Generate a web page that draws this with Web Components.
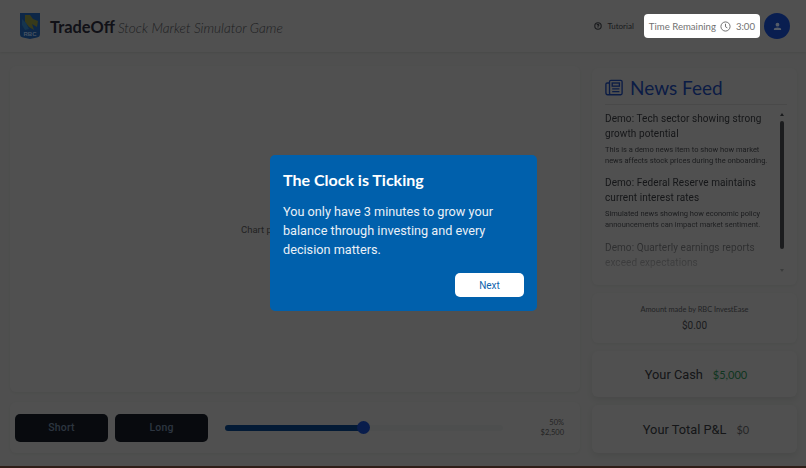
<!DOCTYPE html>
<html>
<head>
<meta charset="utf-8">
<title>TradeOff</title>
<style>
  html, body { margin: 0; height: 100%; }
  body { background: #9e9f9e; font-family: Lato, sans-serif; overflow: hidden; border-bottom: 2px solid #5e3d30; box-sizing: border-box; }
  #app { display: flex; flex-direction: column; height: 466px; }
  #main { flex: 1; display: grid; grid-template-columns: 570px 205px; column-gap: 12px; padding: 14px 9px 13px 10px; min-height: 0; }
  #left { display: flex; flex-direction: column; gap: 10px; min-height: 0; }
  #right { display: flex; flex-direction: column; padding-top: 2px; }
</style>
</head>
<body>
<div id="app">
  <app-header></app-header>
  <div id="main">
    <div id="left">
      <chart-panel>Chart placeholder (demo)</chart-panel>
      <trade-panel></trade-panel>
    </div>
    <div id="right">
      <news-feed>
        <news-item heading="Demo: Tech sector showing strong growth potential">This is a demo news item to show how market news affects stock prices during the onboarding.</news-item>
        <news-item heading="Demo: Federal Reserve maintains current interest rates">Simulated news showing how economic policy announcements can impact market sentiment.</news-item>
        <news-item heading="Demo: Quarterly earnings reports exceed expectations"></news-item>
      </news-feed>
      <invest-card></invest-card>
      <stat-card label="Your Cash" value="$5,000" tone="#226b40" style="height:46px;margin-top:8px"></stat-card>
      <stat-card label="Your Total P&amp;L" value="$0" tone="#4b4c4e" style="height:48px;margin-top:8px"></stat-card>
    </div>
  </div>
</div>
<onboarding-modal heading="The Clock is Ticking" action="Next">You only have 3 minutes to grow your balance through investing and every decision matters.</onboarding-modal>

<script>
class AppHeader extends HTMLElement {
  constructor() {
    super();
    this.attachShadow({ mode: "open" });
    this.shadowRoot.innerHTML = `
      <style>
        :host { display: flex; align-items: center; height: 52px; flex: none; padding: 0 16px 0 20px; box-sizing: border-box; background: #a1a1a1; box-shadow: 0 1px 2px rgba(0,0,0,.08); }
        svg.logo { width: 20px; height: 26px; flex: none; }
        .name { font: 700 16.400px Lato, sans-serif; color: #22222e; margin-left: 10px; }
        .sub { font: italic 300 13.600px Lato, sans-serif; color: #3b3d42; margin-left: 3px; margin-top: 3px; flex: 1; }
        .tutorial { display: flex; align-items: center; gap: 5px; font: 8px Lato, sans-serif; color: #33353a; margin-right: 10px; }
        .tutorial svg { width: 8px; height: 8px; }
        .avatar { width: 26px; height: 26px; border-radius: 50%; background: #123ca0; margin-left: 4px; display: flex; align-items: center; justify-content: center; }
        .avatar svg { width: 9px; height: 9px; }
      </style>
      <svg class="logo" viewBox="0 0 20 26">
        <path d="M0 0H20V21Q20 24 17 24.500L10 26L3 24.500Q0 24 0 21Z" fill="#1a4f8e"/>
        <path d="M5 2H10L13 6L18 8L17 14L12 11L14 17L9 14L5 9Z" fill="#6f7435"/>
        <path d="M2 6L6 10L9 16L5 17L2 12Z" fill="#2a6a9c"/>
        <text x="10" y="23" text-anchor="middle" font-family="Liberation Sans" font-weight="700" font-size="6" fill="#8fa6c4">RBC</text>
      </svg>
      <span class="name">TradeOff</span>
      <span class="sub">Stock Market Simulator Game</span>
      <span class="tutorial">
        <svg viewBox="0 0 10 10" fill="none" stroke="#33353a" stroke-width="1.400"><circle cx="5" cy="5" r="4"/><path d="M3.800 4Q4 2.900 5 3Q6.200 3.100 6 4.200Q5.800 4.800 5 5.100V6"/><path d="M5 6.800V7.500"/></svg>
        Tutorial
      </span>
      <time-remaining>3:00</time-remaining>
      <span class="avatar">
        <svg viewBox="0 0 10 10" fill="#aab8d0"><circle cx="5" cy="3" r="2.100"/><path d="M1 9V8Q1 6.200 5 6.200T9 8V9Z"/></svg>
      </span>
    `;
  }
}

// sits above the dimming layer, that is why it has its own z-index
class TimeRemaining extends HTMLElement {
  constructor() {
    super();
    this.attachShadow({ mode: "open" });
    this.shadowRoot.innerHTML = `
      <style>
        :host { position: relative; z-index: 30; display: flex; align-items: center; height: 24px; padding: 0 5px; border-radius: 4px; background: #fff; font: 9.600px Lato, sans-serif; color: #727272; box-sizing: border-box; }
        svg { width: 11px; height: 11px; margin: 0 5px 0 4px; }
      </style>
      <span>Time Remaining</span>
      <svg viewBox="0 0 12 12" fill="none" stroke="#666" stroke-width="1"><circle cx="6" cy="6" r="5"/><path d="M6 3V6.300L8 7.500"/></svg>
      <slot></slot>
    `;
  }
}

class ChartPanel extends HTMLElement {
  constructor() {
    super();
    this.attachShadow({ mode: "open" });
    this.shadowRoot.innerHTML = `
      <style>
        :host { flex: 1; display: flex; align-items: center; justify-content: center; min-height: 0; border-radius: 6px; background: #a1a1a1; box-shadow: 0 1px 3px rgba(0,0,0,.05); font: 9.500px Roboto, sans-serif; color: #454545; }
      </style>
      <slot></slot>
    `;
  }
}

class TradePanel extends HTMLElement {
  constructor() {
    super();
    this.attachShadow({ mode: "open" });
    this.shadowRoot.innerHTML = `
      <style>
        :host { display: flex; align-items: center; height: 51px; flex: none; padding: 0 16px 0 5px; border-radius: 6px; background: #a1a1a1; box-shadow: 0 1px 3px rgba(0,0,0,.05); box-sizing: border-box; }
        button { width: 93px; height: 28px; margin-right: 7px; border: 0; border-radius: 5px; background: #10151c; color: #5a6b80; font: 500 10.500px Roboto, sans-serif; letter-spacing: .2px; padding: 0; }
        .track { position: relative; flex: none; width: 278px; height: 6px; margin-left: 10px; border-radius: 3px; background: #9a9d9d; }
        .fill { position: absolute; left: 0; top: 0; bottom: 0; width: 50%; border-radius: 3px; background: #07356a; }
        .thumb { position: absolute; left: 132px; top: -3.500px; width: 13px; height: 13px; border-radius: 50%; background: #123a98; }
        .amount { margin-left: auto; text-align: right; font: 7.500px/10px Lato, sans-serif; color: #474747; }
      </style>
      <button>Short</button><button>Long</button>
      <div class="track"><div class="fill"></div><div class="thumb"></div></div>
      <div class="amount">50%<br>$2,500</div>
    `;
  }
}

class NewsFeed extends HTMLElement {
  constructor() {
    super();
    this.attachShadow({ mode: "open" });
    this.shadowRoot.innerHTML = `
      <style>
        :host { display: block; height: 217px; flex: none; padding: 0 10px 0 13px; border-radius: 6px; background: #a1a1a1; box-shadow: 0 1px 3px rgba(0,0,0,.05); box-sizing: border-box; }
        h2 { display: flex; align-items: center; gap: 7px; height: 34px; margin: 0; padding-top: 2px; font: 400 19px Lato, sans-serif; color: #17388a; border-bottom: 1px solid #929292; }
        h2 svg { width: 18px; height: 17px; flex: none; }
        .body { display: flex; height: 171px; }
        .list { flex: 1; padding: 6px 10px 0 0; overflow: hidden; -webkit-mask-image: linear-gradient(#000 116px, rgba(0,0,0,.2) 166px); mask-image: linear-gradient(#000 116px, rgba(0,0,0,.2) 166px); }
        .bar { width: 6px; flex: none; margin-right: 2px; position: relative; }
        .bar i { position: absolute; left: .500px; width: 0; height: 0; border: 2.500px solid transparent; }
        .up { top: 6px; border-bottom: 3px solid #33363a !important; }
        .down { bottom: 2px; border-top: 3px solid #767979 !important; }
        .thumb { position: absolute; left: 1px; top: 16px; width: 4px; height: 128px; border-radius: 2px; background: #36393c; }
      </style>
      <h2>
        <svg viewBox="0 0 20 18" fill="none" stroke="#17388a" stroke-width="1.500">
          <rect x="5" y="1" width="14" height="16" rx="1.500"/>
          <path d="M5 4H2.500Q1 4 1 5.500V14.500Q1 17 3 17H6"/>
          <rect x="8" y="4" width="8" height="3.500"/>
          <path d="M8 10.500H16M8 13.500H16"/>
        </svg>
        News Feed
      </h2>
      <div class="body">
        <div class="list"><slot></slot></div>
        <div class="bar"><i class="up"></i><div class="thumb"></div><i class="down"></i></div>
      </div>
    `;
  }
}

class NewsItem extends HTMLElement {
  constructor() {
    super();
    this.attachShadow({ mode: "open" });
    this.shadowRoot.innerHTML = `
      <style>
        :host { display: block; margin-bottom: 9px; }
        h3 { margin: 0; font: 400 10px/15px Roboto, sans-serif; color: #2b2d31; letter-spacing: .08px; }
        p { margin: 4px 0 0; font: 7.500px/10.700px Roboto, sans-serif; color: #36383c; }
      </style>
      <h3></h3>
      <p><slot></slot></p>
    `;
  }
  connectedCallback() {
    this.shadowRoot.querySelector("h3").textContent = this.getAttribute("heading");
  }
}

class InvestCard extends HTMLElement {
  constructor() {
    super();
    this.attachShadow({ mode: "open" });
    this.shadowRoot.innerHTML = `
      <style>
        :host { display: flex; flex-direction: column; align-items: center; justify-content: center; gap: 6px; height: 50px; flex: none; margin-top: 8px; border-radius: 6px; background: #a1a1a1; box-shadow: 0 1px 3px rgba(0,0,0,.05); }
        .label { font: 7.400px Lato, sans-serif; color: #44454a; }
        .value { font: 400 10px Roboto, sans-serif; color: #36383c; }
      </style>
      <span class="label">Amount made by RBC InvestEase</span>
      <span class="value">$0.00</span>
    `;
  }
}

class StatCard extends HTMLElement {
  constructor() {
    super();
    this.attachShadow({ mode: "open" });
    this.shadowRoot.innerHTML = `
      <style>
        :host { display: flex; align-items: center; justify-content: center; gap: 10px; flex: none; border-radius: 6px; background: #a1a1a1; box-shadow: 0 3px 6px rgba(0,0,0,.08); padding-left: 3px; }
        .label { font: 12.800px Roboto, sans-serif; color: #2a2c30; }
        .value { font: 11px Lato, sans-serif; }
      </style>
      <span class="label"></span>
      <span class="value"></span>
    `;
  }
  connectedCallback() {
    this.shadowRoot.querySelector(".label").textContent = this.getAttribute("label");
    const value = this.shadowRoot.querySelector(".value");
    value.textContent = this.getAttribute("value");
    value.style.color = this.getAttribute("tone");
  }
}

class OnboardingModal extends HTMLElement {
  constructor() {
    super();
    this.attachShadow({ mode: "open" });
    this.shadowRoot.innerHTML = `
      <style>
        :host { position: fixed; inset: 0; z-index: 20; display: flex; align-items: center; justify-content: center; background: rgba(0,0,0,.5); }
        .card { width: 267px; height: 156px; margin: 0 0 2px 1px; padding: 14px 13px; box-sizing: border-box; border-radius: 5px; background: #0060ac; color: #fff; display: flex; flex-direction: column; }
        h2 { margin: 0; font: 700 16px/22px Lato, sans-serif; }
        p { margin: 11px 0 0; font: 12.700px/19.200px Roboto, sans-serif; color: #eaf0f7; }
        button { align-self: flex-end; width: 69px; height: 24px; margin-top: auto; padding: 0; border: 0; border-radius: 5px; background: #fff; color: #0f63ad; font: 400 10px Roboto, sans-serif; }
      </style>
      <div class="card">
        <h2></h2>
        <p><slot></slot></p>
        <button></button>
      </div>
    `;
  }
  connectedCallback() {
    this.shadowRoot.querySelector("h2").textContent = this.getAttribute("heading");
    this.shadowRoot.querySelector("button").textContent = this.getAttribute("action");
  }
}

window.customElements.define("app-header", AppHeader);
window.customElements.define("time-remaining", TimeRemaining);
window.customElements.define("chart-panel", ChartPanel);
window.customElements.define("trade-panel", TradePanel);
window.customElements.define("news-feed", NewsFeed);
window.customElements.define("news-item", NewsItem);
window.customElements.define("invest-card", InvestCard);
window.customElements.define("stat-card", StatCard);
window.customElements.define("onboarding-modal", OnboardingModal);
</script>
</body>
</html>
